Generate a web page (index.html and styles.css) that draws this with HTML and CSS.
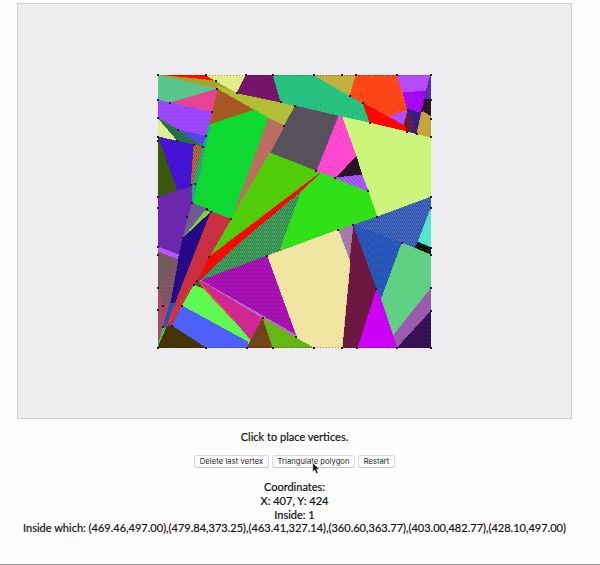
FILE: index.html
```html
<!DOCTYPE html>
<html lang="en">
<head>
<meta charset="utf-8">
<title>Polygon triangulation</title>
<link rel="stylesheet" href="styles.css">
</head>
<body>
<main class="app">
  <svg class="board" id="board" viewBox="18 4 553 414"></svg>
  <p class="hint">Click to place vertices.</p>
  <div class="controls">
    <button class="btn btn-delete">Delete last vertex</button>
    <button class="btn btn-triangulate">Triangulate polygon<svg class="cursor" viewBox="0 0 8 13"><path d="M.7.7V10L2.8 8l1.5 3.8 1.8-.8L4.6 7.3h2.9Z"/></svg></button>
    <button class="btn btn-restart">Restart</button>
  </div>
  <div class="info">
    <div>Coordinates:</div>
    <div>X: 407, Y: 424</div>
    <div>Inside: 1</div>
    <div class="which">Inside which: (469.46,497.00),(479.84,373.25),(463.41,327.14),(360.60,363.77),(403.00,482.77),(428.10,497.00)</div>
  </div>
</main>
<script src="board.js"></script>
</body>
</html>
```
FILE: styles.css
```css
body {
  margin: 0;
  background: #fefdfe;
  color: #111;
  font-family: Lato, sans-serif;
  font-size: 11.03px;
  line-height: 14px;
}
.app {
  box-sizing: border-box;
  height: 565px;
  padding-top: 3px;
  border-bottom: 1px solid #999;
  display: flex;
  flex-direction: column;
  align-items: center;
  overflow: hidden;
}
.board {
  width: 553px;
  height: 414px;
  flex: none;
  margin-right: 11px;
  border: 1px solid #d0cfd1;
  background: #edecee;
}
.hint {
  margin: 11px 11px 0 0;
  -webkit-text-stroke: .2px #111;
}
.controls {
  display: flex;
  gap: 3px;
  margin: 11px 11px 0 0;
}
.btn {
  position: relative;
  box-sizing: border-box;
  height: 13px;
  padding: 0;
  border: 1px solid #d9d8da;
  border-bottom-color: #c4c3c5;
  border-radius: 3px;
  background: #fff;
  color: #222;
  font: 7.6px/11px Inter, sans-serif;
  letter-spacing: .04px;
  white-space: nowrap;
}
.btn-delete { width: 75px; letter-spacing: .08px; }
.btn-triangulate { width: 83px; }
.btn-restart { width: 37px; }
.cursor {
  position: absolute;
  left: 39px;
  top: 6px;
  width: 8px;
  height: 13px;
}
.cursor path {
  fill: #111;
  stroke: #fff;
  stroke-width: .6;
}
.info {
  margin: 12px 11px 0 0;
  text-align: center;
  line-height: 13.8px;
  white-space: nowrap;
  -webkit-text-stroke: .2px #111;
}
```
FILE: board.js
```js
const NS = 'http://www.w3.org/2000/svg';
const board = document.getElementById('board');

// Dot layouts: [tile width, tile height, dots]
const DOTS = {
  half: [4, 4, [[0, 0], [2, 0], [1, 1], [3, 2], [0, 3], [2, 3]]],
  quarter: [4, 4, [[0, 0], [2, 1], [1, 2], [3, 3]]],
  sparse: [6, 6, [[0, 0], [3, 3]]],
  rare: [12, 8, [[0, 4], [4, 2], [8, 0]]]
};
const TILE = 24;

// [points, base colour, dot colour, dot layout]
const FACES = [
  ['158,75 206,75 216,81', '#ff1000'],
  ['158,75 216,81 237,93 217,89', '#96aa24', '#c69820', 'half'],
  ['217,86 237,93 295,106 284,126 254,110 217,89', '#b0bf35'],
  ['206,75 246,75 237,93 216,81', '#d6f080', '#f4e898', 'half'],
  ['246,75 273,75 281,102 237,93', '#851174', '#5c1a5c', 'half'],
  ['273,75 314,75 363,103 370,123 342,117 295,106 281,102', '#28c280', '#28a868', 'rare'],
  ['314,75 356,75 350,96', '#b6bd35', '#d69a50', 'half'],
  ['356,75 397,75 403,93 408,110 388,117 363,103 350,96', '#ff4417', '#f87828', 'rare'],
  ['397,75 431,75 426,91 403,93', '#bd46ff', '#a058ec', 'quarter'],
  ['403,93 426,91 420,113 408,110', '#b400ff', '#7900df', 'quarter'],
  ['431,75 431,99 423,103 426,91', '#4030a0', '#6b32c0', 'half'],
  ['425,99 431,99 431,118 422,111', '#38142c', '#17151e', 'half'],
  ['388,117 408,110 405,127', '#bd46ff', '#a058ec', 'quarter'],
  ['408,110 415,118 412,133 407,132 404,125', '#722038', '#3e203e', 'half'],
  ['408,110 420,113 417,134 412,133 415,125', '#252080', '#5820a8', 'quarter'],
  ['422,111 431,117 431,138 417,134', '#d69c2c', '#a6b450', 'half'],
  ['363,103 388,117 405,126 407,132 370,123', '#ff0500'],
  ['342,117 370,123 407,132 431,138 431,197 377,217 368,191 356,156', '#cbf57b'],
  ['356,156 362,175 335,178', '#271526'],
  ['338,116 342,117 356,156 335,178 316,171', '#ff46ce', '#ec68d5', 'sparse'],
  ['295,106 338,116 316,171 270,153', '#5b5154', '#4c5379', 'quarter'],
  ['217,89 254,110 209,125', '#b84d22', '#8d6824', 'half'],
  ['268,118 284,126 270,153 231,219', '#cf665b', '#9b796b', 'half'],
  ['209,125 254,110 268,118 231,219 192,203', '#08df24', '#1ec958', 'quarter'],
  ['270,153 316,171 320,173 209,258 231,219', '#50cc0b'],
  ['302,190 280,250 267,256 200,281 240,242', '#248a54', '#63a55b', 'half'],
  ['318,172 335,178 368,191 377,217 353,225 338,230 280,250 302,190', '#22e417', '#56d51b', 'quarter'],
  ['320,173 302,190 240,242 197,281 209,257', '#ff0500'],
  ['335,178 362,175 368,191', '#a946ff', '#a878e8', 'quarter'],
  ['353,225 377,217 431,197 431,208 415,248 402,243', '#2555bf', '#6270a6', 'half'],
  ['353,225 402,243 381,300 376,289', '#2855b8', '#4078c0', 'rare'],
  ['431,208 431,248 418,242', '#43edbb', '#71d9df', 'half'],
  ['418,242 431,248 431,255 415,248', '#05100e', '#162d28', 'quarter'],
  ['402,243 431,255 431,288 393,336 381,300', '#57d37b', '#79c595', 'quarter'],
  ['431,288 431,311 397,348 393,336', '#a854b4', '#8368a4', 'half'],
  ['431,311 431,348 397,348', '#3c1064', '#28133e', 'half'],
  ['376,289 381,300 393,336 397,348 357,348', '#cc00f4'],
  ['353,225 376,289 357,348 342,348 349,262', '#70183f', '#601846', 'quarter'],
  ['338,230 353,225 349,262', '#b47ab0', '#8d79a6', 'half'],
  ['267,256 338,230 350,262 342,348 314,348 296,338', '#f3e6a6', '#e7e493', 'quarter'],
  ['267,256 338,230 350,262 342,348 314,348 296,338', 'none', '#efc294', 'rare'],
  ['158,75 217,89 170,103 158,100', '#46cf8b', '#7bb58d', 'half'],
  ['217,89 212,112 170,103', '#f83691', '#c95a98', 'half'],
  ['158,100 170,103 212,112 206,136 178,130 158,118', '#b044ff', '#7b49f4', 'half'],
  ['178,130 206,136 203,147', '#3c46e8', '#8143e3', 'half'],
  ['158,118 178,130 203,147 177,141', '#227346', '#286a42', 'quarter'],
  ['158,119 177,141 158,137', '#d2f488', '#efe99c', 'half'],
  ['158,137 194,145 191,187 177,191', '#3f0eda', '#5520bd', 'quarter'],
  ['158,137 177,191 158,197', '#2b5b0c', '#52510d', 'half'],
  ['194,145 203,147 198,168 191,187', '#a87434', '#a24b38', 'half'],
  ['203,147 209,125 209,130 193,203 191,193', '#18bb59', '#278bbd', 'half'],
  ['158,197 191,187 192,203 178,260 158,248', '#652bb5', '#80219b', 'quarter'],
  ['158,247 179,255 178,261 158,252', '#bd55ff', '#a460ed', 'quarter'],
  ['192,203 207,209 183,238', '#795790', '#5b648d', 'half'],
  ['205,211 211,212 183,238', '#7ad634'],
  ['183,238 211,212 175,304 169,303 178,260', '#1c008e', '#41107c', 'quarter'],
  ['211,212 231,219 209,257 197,281 170,328 173,309', '#d42b3b', '#aa3c55', 'quarter'],
  ['158,252 178,260 158,288', '#7c5457', '#626460', 'half'],
  ['158,288 178,260 170,303 158,310', '#8d5860', '#645265', 'half'],
  ['158,288 163,306 170,303 163,327 158,346', '#ba405d', '#895b6d', 'half'],
  ['170,303 175,303 168,328 163,327', '#2155b5', '#454bb0', 'quarter'],
  ['163,327 166,328 158,346', '#4dcf60', '#538773', 'half'],
  ['166,328 182,306 194,285 197,280 180,300 173,309', '#d9373b', '#a33c43', 'quarter'],
  ['197,280 194,285 205,290', '#75401d', '#356c25', 'half'],
  ['194,285 205,290 251,338 248,346 182,306', '#5bfc45', '#69f074', 'quarter'],
  ['182,306 248,342 247,348 206,348 172,326', '#366afa', '#754ef5', 'half'],
  ['158,348 167,327 172,326 206,348', '#3e3500', '#552f12', 'quarter'],
  ['200,281 267,256 296,336', '#b900a4', '#852dc4', 'half'],
  ['200,281 263,318 251,340', '#e01e8a', '#b837a0', 'half'],
  ['200,280 296,335 296,338', '#ae65ca', '#c48bd6', 'quarter'],
  ['263,318 273,348 247,348 251,340', '#803b17', '#604e20', 'half'],
  ['263,318 296,338 314,348 273,348', '#4fbd10', '#8aac18', 'half'],
  ['198,280 234,320 233,320 205,290', '#e8503c'],
];

const VERTICES = '158,75 206,75 216,81 246,75 273,75 314,75 342,75 356,75 397,75 431,75 431,100 431,119 431,137 431,197 431,208 431,248 431,255 431,288 431,311 431,348 397,348 357,348 342,348 314,348 273,348 247,348 206,348 158,348 158,310 158,288 158,255 158,247 158,208 158,197 158,141 158,137 158,118 158,100 170,103 217,89 212,112 237,93 281,102 295,106 284,126 363,103 370,123 350,96 408,110 407,132 417,134 422,111 178,130 177,141 203,147 206,136 194,145 191,185 195,184 192,203 207,209 211,212 187,217 231,219 183,238 209,257 197,281 194,285 182,306 163,306 163,327 172,326 263,318 296,337 376,289 353,225 338,230 377,217 402,243 368,191 316,171 335,178 267,256'.split(' ');

function add(parent, name, attrs) {
  const el = document.createElementNS(NS, name);
  for (const key in attrs) el.setAttribute(key, attrs[key]);
  parent.appendChild(el);
  return el;
}

const defs = add(board, 'defs', {});
const clip = add(defs, 'clipPath', { id: 'square' });
add(clip, 'rect', { x: 158, y: 75, width: 273, height: 273 });
const mosaic = add(board, 'g', { 'clip-path': 'url(#square)', 'shape-rendering': 'crispEdges' });
add(mosaic, 'rect', { x: 158, y: 75, width: 273, height: 273, fill: '#703850' });

FACES.forEach(([points, base, dot, layout], i) => {
  let fill = base;
  if (layout) {
    const [w, h, dots] = DOTS[layout];
    const tile = add(defs, 'pattern', { id: 'dots' + i, width: TILE, height: TILE, patternUnits: 'userSpaceOnUse' });
    add(tile, 'rect', { width: TILE, height: TILE, fill: base });
    for (let ty = 0; ty < TILE; ty += h) {
      for (let tx = 0; tx < TILE; tx += w) {
        dots.forEach(([x, y]) => add(tile, 'rect', { x: tx + x, y: ty + y, width: 1, height: 1, fill: dot }));
      }
    }
    fill = `url(#dots${i})`;
  }
  add(mosaic, 'polygon', { points, fill, stroke: fill, 'stroke-width': base === 'none' ? 0 : 0.8 });
});
add(board, 'path', { d: 'M158 75.5H431M158 347.5H431', stroke: '#000', 'stroke-opacity': 0.35, 'stroke-dasharray': '1 2' });
VERTICES.forEach(v => {
  const [x, y] = v.split(',').map(Number);
  add(board, 'rect', { x: x - 1, y: y - 1, width: 2, height: 2, fill: '#2b1820' });
});
```
